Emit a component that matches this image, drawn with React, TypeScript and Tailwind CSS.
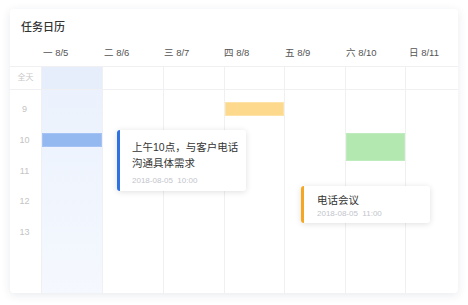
import React from "react";

const font = { fontFamily: '"Liberation Sans","Noto Sans CJK SC",sans-serif' };

const days = [
  { label: "一 8/5", w: "w-[61px]", pl: "pl-[2px]" },
  { label: "二 8/6", w: "w-[61px]", pl: "pl-[2px]" },
  { label: "三 8/7", w: "w-[61px]", pl: "pl-[1px]" },
  { label: "四 8/8", w: "w-[60px]", pl: "pl-[0px]" },
  { label: "五 8/9", w: "w-[61px]", pl: "pl-[1px]" },
  { label: "六 8/10", w: "w-[60px]", pl: "pl-[1px]" },
  { label: "日 8/11", w: "flex-1", pl: "pl-[4px]" },
];

const hours = ["9", "10", "11", "12", "13"];

export default function App() {
  return (
    <div className="w-[468px] h-[305px] bg-white pt-[9px] pl-[10px]" style={font}>
      <div className="w-[448px] h-[284px] bg-white rounded-[4px] shadow-[0_2px_10px_rgba(30,50,90,0.10)] overflow-hidden flex flex-col">
        <div className="h-[36px] flex items-center pl-[11px] text-[11px] leading-[14px] text-[#333] font-medium">
          任务日历
        </div>
        {/* header */}
        <div className="h-[21px] flex">
          <div className="w-[31px] shrink-0" />
          {days.map((d) => (
            <div key={d.label} className={`${d.w} shrink-0 ${d.pl} pt-[2px] text-[9.5px] leading-[12px] text-[#555] whitespace-nowrap`}>
              {d.label}
            </div>
          ))}
        </div>
        {/* all day row */}
        <div className="h-[24px] flex border-y border-[#f0f0f2]">
          <div className="w-[31px] shrink-0 flex items-center justify-center text-[8px] text-[#c8c8c8]">全天</div>
          {days.map((d, i) => (
            <div
              key={d.label}
              className={`${d.w} shrink-0 border-l border-[#f0f0f2] ${i === 0 ? "bg-[#e6eefc]" : ""}`}
            />
          ))}
        </div>
        {/* body */}
        <div className="flex-1 flex relative">
          <div className="w-[31px] shrink-0 flex flex-col items-center pt-[13px] pr-[2px] text-[9px] leading-[12px] text-[#c4c4c4]">
            {hours.map((h) => (
              <div key={h} className="h-[30.75px]">{h}</div>
            ))}
          </div>
          {days.map((d, i) => (
            <div
              key={d.label}
              className={`${d.w} shrink-0 border-l border-[#f0f0f2] relative ${i === 0 ? "bg-linear-to-b from-[#ebf2fd] to-[#f5f8fe]" : ""}`}
            >
              {i === 0 && (
                <div className="absolute left-0 right-0 top-[43px] h-[14px] bg-[#94b8f0] border border-[#a6c4f3]" />
              )}
              {i === 3 && (
                <div className="absolute left-0 right-0 top-[12px] h-[14px] bg-[#fdd98e] border border-[#fee3a8]" />
              )}
              {i === 5 && (
                <div className="absolute left-0 right-0 top-[43px] h-[28px] bg-[#b3e8b0] border border-[#bfecbc]" />
              )}
            </div>
          ))}

          {/* event card 1 */}
          <div className="absolute left-[107px] top-[40px] w-[129px] h-[61px] bg-white rounded-[3px] border-l-[3px] border-[#2f72e4] shadow-[0_1px_6px_rgba(0,0,0,0.13)] pl-[12px] pt-[9px]">
            <div className="text-[10.5px] leading-[16px] text-[#333] whitespace-nowrap">上午10点，与客户电话</div>
            <div className="text-[10.5px] leading-[16px] text-[#333] whitespace-nowrap">沟通具体需求</div>
            <div className="mt-[4px] text-[8px] leading-[12px] text-[#c2c5cc] whitespace-nowrap">2018-08-05&nbsp;&nbsp;10:00</div>
          </div>

          {/* event card 2 */}
          <div className="absolute left-[291px] top-[96px] w-[129px] h-[37px] bg-white rounded-[3px] border-l-[3px] border-[#f5a623] shadow-[0_1px_6px_rgba(0,0,0,0.13)] pl-[13px] pt-[6px]">
            <div className="text-[10.5px] leading-[16px] text-[#333] whitespace-nowrap">电话会议</div>
            <div className="text-[8px] leading-[12px] text-[#c2c5cc] whitespace-nowrap">2018-08-05&nbsp;&nbsp;11:00</div>
          </div>
        </div>
      </div>
    </div>
  );
}
